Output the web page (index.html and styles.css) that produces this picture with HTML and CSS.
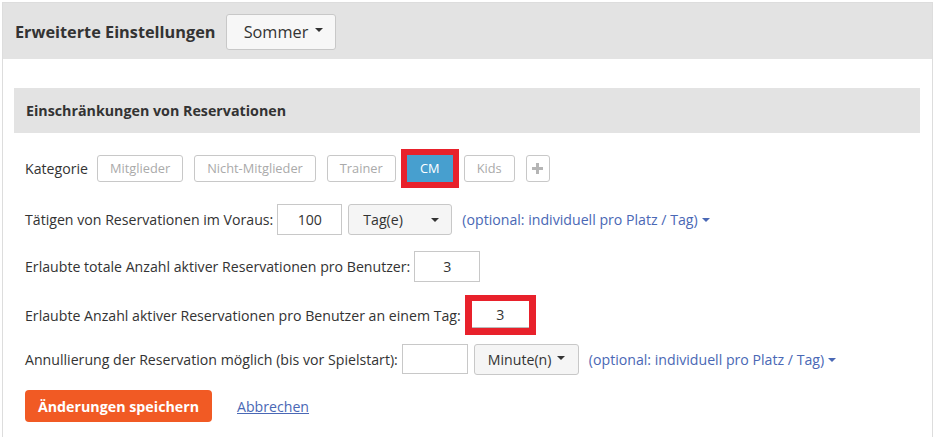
FILE: index.html
```html
<!DOCTYPE html>
<html lang="de">
<head>
<meta charset="utf-8">
<title>Erweiterte Einstellungen</title>
<link rel="stylesheet" href="styles.css">
</head>
<body>
<div class="panel">
  <div class="panel-head">
    <h1 class="title">Erweiterte Einstellungen</h1>
    <button class="dropdown">Sommer <span class="caret"></span></button>
  </div>
  <div class="panel-body">
    <div class="section-head">Einschränkungen von Reservationen</div>

    <div class="row row-cat">
      <span class="label">Kategorie</span>
      <div class="cats">
        <span class="cat">Mitglieder</span>
        <span class="cat">Nicht-Mitglieder</span>
        <span class="cat">Trainer</span>
        <span class="mark mark-cat"><span class="cat cat-active">CM</span></span>
        <span class="cat">Kids</span>
        <span class="cat cat-plus"><svg width="11" height="11" viewBox="0 0 11 11"><path d="M4 0h3v4h4v3H7v4H4V7H0V4h4z" fill="#b5b5b5"/></svg></span>
      </div>
    </div>

    <div class="row row-2">
      <span class="label">Tätigen von Reservationen im Voraus:</span>
      <span class="input w65">100</span>
      <span class="select sel-tag">Tag(e) <span class="caret"></span></span>
      <a class="opt">(optional: individuell pro Platz / Tag)<span class="caret caret-blue"></span></a>
    </div>

    <div class="row row-3">
      <span class="label">Erlaubte totale Anzahl aktiver Reservationen pro Benutzer:</span>
      <span class="input w66">3</span>
    </div>

    <div class="row row-4">
      <span class="label">Erlaubte Anzahl aktiver Reservationen pro Benutzer an einem Tag:</span>
      <span class="mark mark-input"><span class="input input-mark">3</span></span>
    </div>

    <div class="row row-5">
      <span class="label">Annullierung der Reservation möglich (bis vor Spielstart):</span>
      <span class="input w66 h30"></span>
      <span class="select sel-min">Minute(n) <span class="caret"></span></span>
      <a class="opt">(optional: individuell pro Platz / Tag)<span class="caret caret-blue"></span></a>
    </div>

    <div class="row row-actions">
      <button class="save">Änderungen speichern</button>
      <a class="cancel" href="#">Abbrechen</a>
    </div>
  </div>
</div>
</body>
</html>
```

FILE: styles.css
```css
* { box-sizing: border-box; }
html, body { margin: 0; padding: 0; background: #fff; }
body {
  font-family: "Open Sans", "Noto Sans", sans-serif;
  font-size: 14.15px;
  color: #333;
}
.panel {
  margin: 2px 6px 0 2px;
  border: 1px solid #ddd;
  border-bottom: none;
  height: 440px;
}
.panel-head {
  background: #e3e3e3;
  height: 56px;
  display: flex;
  align-items: center;
  padding: 0 12px;
  padding-top: 2px;
}
.title {
  margin: 0;
  font-size: 16.3px;
  font-weight: 700;
  color: #333;
}
.dropdown {
  margin-left: 11px;
  height: 36px;
  width: 110px;
  background: #f7f7f7;
  border: 1px solid #c8c8c8;
  border-radius: 3px;
  font-family: inherit;
  font-size: 16.3px;
  color: #333;
  display: flex;
  align-items: center;
  justify-content: center;
  gap: 7px;
  padding: 0 0 0 4px;
}
.caret {
  display: inline-block;
  width: 0; height: 0;
  border-left: 4px solid transparent;
  border-right: 4px solid transparent;
  border-top: 4px solid #333;
}
.dropdown .caret { margin-top: -4px; }
.panel-body {
  padding: 29px 12px 0 11px;
}
.section-head {
  background: #e3e3e3;
  height: 45px;
  display: flex;
  align-items: center;
  padding-left: 12px;
  font-weight: 700;
  font-size: 14.25px;
  color: #333;
}
.row {
  display: flex;
  align-items: center;
  padding-left: 11px;
}
.row-cat { margin-top: 15px; height: 40px; }
.row-2 { margin-top: 16px; height: 31px; }
.row-3 { margin-top: 16px; height: 31px; }
.row-4 { margin-top: 13px; height: 40px; }
.row-5 { margin-top: 9px; height: 30px; }
.row-actions { margin-top: 16px; height: 32px; }

.cats { display: flex; align-items: center; gap: 11px; margin-left: 9px; }
.cat {
  height: 27px;
  padding: 0 12px;
  border: 1px solid #c8c8c8;
  border-radius: 3px;
  font-size: 12.8px;
  color: #aaa;
  display: flex;
  align-items: center;
  background: #fff;
}
.mark {
  display: flex;
  background: #e8212b;
  padding: 6px;
}
.mark-cat { margin: 0 -6px 0 -6px; }
.cat-active {
  background: #479fcf;
  border-color: #479fcf;
  border-radius: 0;
  color: #fff;
  width: 46px;
  justify-content: center;
}
.cat-plus { padding: 0; width: 24px; justify-content: center; }

.input {
  height: 31px;
  border: 1px solid #c8c8c8;
  display: flex;
  align-items: center;
  justify-content: center;
  font-size: 14.15px;
  color: #333;
  background: #fff;
}
.w65 { width: 65px; margin-left: 4px; }
.w66 { width: 66px; margin-left: 4px; }
.h30 { height: 30px; }
.mark-input { margin-left: 4px; padding: 6px 7px 7px 7px; }
.input-mark {
  width: 57px;
  height: 27px;
  border: none;
  border-bottom: 1px solid #bbb;
}
.select {
  height: 31px;
  border: 1px solid #c8c8c8;
  border-radius: 3px;
  background: #f5f5f5;
  display: flex;
  align-items: center;
  font-size: 14.15px;
  color: #333;
}
.sel-tag {
  width: 104px;
  margin-left: 6px;
  padding-left: 14px;
  justify-content: space-between;
  padding-right: 12px;
}
.sel-tag .caret { margin-top: 1px; }
.sel-min {
  width: 105px;
  margin-left: 6px;
  padding-left: 13px;
  gap: 6px;
}
.sel-min .caret { margin-top: -2px; }
.opt {
  margin-left: 10px;
  color: #4a68b5;
  font-size: 14.15px;
  display: flex;
  align-items: center;
}
.caret-blue {
  border-top-color: #4a68b5;
  margin-left: 4px;
  margin-top: 1px;
}
.save {
  height: 32px;
  width: 187px;
  background: #f15a24;
  border: none;
  border-radius: 4px;
  color: #fff;
  font-family: inherit;
  font-weight: 700;
  font-size: 14.25px;
  padding: 0;
}
.cancel {
  margin-left: 25px;
  color: #4a68b5;
  text-decoration: underline;
  font-size: 14.15px;
}
```
